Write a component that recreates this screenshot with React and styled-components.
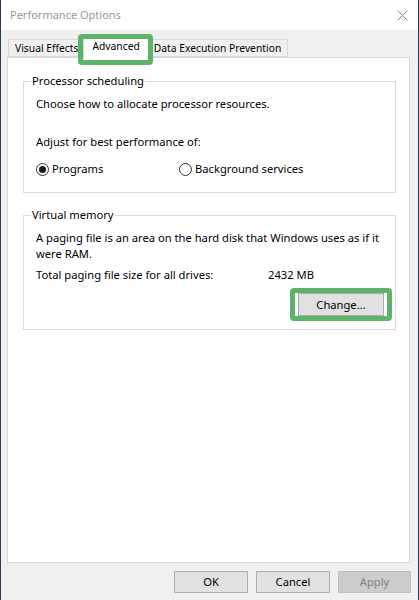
import React from "react";
import styled, { createGlobalStyle } from "styled-components";

const Global = createGlobalStyle`
  html, body { margin: 0; padding: 0; background: #f0f0f0; }
  body { font-family: "Noto Sans", "Open Sans", sans-serif; font-size: 11.2px; color: #000; }
  * { box-sizing: border-box; }
`;

const Window = styled.div`
  width: 419px;
  height: 600px;
  display: flex;
  flex-direction: column;
  border-left: 1px solid #2b3b52;
  border-right: 1px solid #2b3b52;
  background: #f0f0f0;
`;

const TitleBar = styled.div`
  height: 30px;
  background: #fff;
  display: flex;
  align-items: center;
  justify-content: space-between;
  padding: 0 10px 0 9px;
`;

const Title = styled.span`
  color: #999;
  font-size: 11px;
  line-height: 16px;
`;

const Body = styled.div`
  flex: 1;
  display: flex;
  flex-direction: column;
  padding: 6px 8px 7px 6px;
`;

const TabStrip = styled.div`
  display: flex;
  align-items: flex-end;
  margin: 0 0 -1px 1px;
`;

const Tab = styled.div`
  position: relative;
  height: ${(p) => (p.$active ? "22px" : "18px")};
  margin: ${(p) => (p.$active ? "0 -2px 0 -2px" : "0 0 1px 0")};
  padding: ${(p) => (p.$active ? "0 8px" : "0 6px")};
  padding-bottom: ${(p) => (p.$active ? "3px" : "0")};
  background: ${(p) => (p.$active ? "#fff" : "#f0f0f0")};
  border: 1px solid #d9d9d9;
  border-bottom: ${(p) => (p.$active ? "none" : "1px solid #d9d9d9")};
  z-index: ${(p) => (p.$active ? 2 : 1)};
  display: flex;
  align-items: center;
  font-size: 10.3px;
  line-height: 16px;
  white-space: nowrap;
`;

const Highlight = styled.div`
  position: absolute;
  left: ${(p) => p.$l}px;
  right: ${(p) => p.$r}px;
  top: ${(p) => p.$t}px;
  bottom: ${(p) => p.$b}px;
  border: 5px solid #5cb46b;
  border-radius: 4px;
  pointer-events: none;
`;

const Panel = styled.div`
  flex: 1;
  background: #fff;
  border: 1px solid #d9d9d9;
  padding: 15px 13px 0 15px;
  display: flex;
  flex-direction: column;
  gap: 14px;
`;

const Group = styled.fieldset`
  margin: 0;
  padding: 0;
  border: 1px solid #dcdcdc;
  min-width: 0;
`;

const Legend = styled.legend`
  margin-left: 7px;
  padding: 0 1px;
  line-height: 16px;
`;

const GroupContent = styled.div`
  padding: 7px 11px ${(p) => p.$pb}px 12px;
  display: flex;
  flex-direction: column;
`;

const Line = styled.div`
  line-height: 16px;
  white-space: nowrap;
  margin-top: ${(p) => p.$mt || 0}px;
`;

const RadioRow = styled.div`
  display: grid;
  grid-template-columns: 143px auto;
  margin-top: 11px;
  line-height: 16px;
`;

const RadioLabel = styled.label`
  display: flex;
  align-items: center;
  gap: 3px;
`;

const RadioCircle = styled.span`
  width: 13px;
  height: 13px;
  border-radius: 50%;
  border: 1px solid #333;
  background: #fff;
  display: flex;
  align-items: center;
  justify-content: center;
  &::after {
    content: "";
    width: 7px;
    height: 7px;
    border-radius: 50%;
    background: ${(p) => (p.$checked ? "#1a1a1a" : "transparent")};
  }
`;

const SizeRow = styled.div`
  display: grid;
  grid-template-columns: 232px auto;
  line-height: 16px;
  margin-top: 5px;
`;

const ButtonRow = styled.div`
  display: flex;
  justify-content: flex-end;
  margin-top: 10px;
`;

const Button = styled.button`
  position: relative;
  font-family: inherit;
  font-size: 11.2px;
  color: ${(p) => (p.disabled ? "#838383" : "#000")};
  width: ${(p) => p.$w}px;
  height: ${(p) => p.$h}px;
  background: ${(p) => (p.disabled ? "#cccccc" : "#e1e1e1")};
  border: 1px solid ${(p) => (p.disabled ? "#bfbfbf" : "#adadad")};
  padding: 0;
  line-height: 16px;
`;

const Footer = styled.div`
  display: flex;
  justify-content: flex-end;
  gap: 8px;
  margin: 8px -1px 0 0;
`;

export default function App() {
  return (
    <>
      <Global />
      <Window>
        <TitleBar>
          <Title>Performance Options</Title>
          <svg width="11" height="11" viewBox="0 0 11 11">
            <path d="M0.5 0.5 L10.5 10.5 M10.5 0.5 L0.5 10.5" stroke="#8a8a8a" strokeWidth="1" fill="none" />
          </svg>
        </TitleBar>
        <Body>
          <TabStrip>
            <Tab>Visual Effects</Tab>
            <Tab $active>
              Advanced
              <Highlight $l={-6} $r={-5} $t={-3} $b={-7} />
            </Tab>
            <Tab>Data Execution Prevention</Tab>
          </TabStrip>
          <Panel>
            <Group>
              <Legend>Processor scheduling</Legend>
              <GroupContent $pb={15}>
                <Line>Choose how to allocate processor resources.</Line>
                <Line $mt={22}>Adjust for best performance of:</Line>
                <RadioRow>
                  <RadioLabel>
                    <RadioCircle $checked />
                    Programs
                  </RadioLabel>
                  <RadioLabel>
                    <RadioCircle />
                    Background services
                  </RadioLabel>
                </RadioRow>
              </GroupContent>
            </Group>
            <Group>
              <Legend>Virtual memory</Legend>
              <GroupContent $pb={13}>
                <Line>A paging file is an area on the hard disk that Windows uses as if it</Line>
                <Line>were RAM.</Line>
                <SizeRow>
                  <span>Total paging file size for all drives:</span>
                  <span>2432 MB</span>
                </SizeRow>
                <ButtonRow>
                  <Button $w={86} $h={23}>
                    Change...
                    <Highlight $l={-9} $r={-9} $t={-6} $b={-6} />
                  </Button>
                </ButtonRow>
              </GroupContent>
            </Group>
          </Panel>
          <Footer>
            <Button $w={74} $h={22}>OK</Button>
            <Button $w={74} $h={22}>Cancel</Button>
            <Button $w={73} $h={22} disabled>Apply</Button>
          </Footer>
        </Body>
      </Window>
    </>
  );
}
